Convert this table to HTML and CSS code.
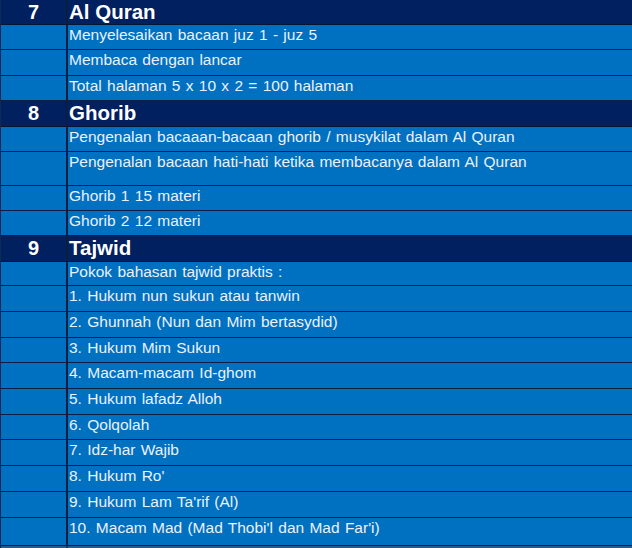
FILE: index.html
```html
<!DOCTYPE html>
<html>
<head>
<meta charset="utf-8">
<link rel="stylesheet" href="styles.css">
</head>
<body>
<div class="sheet">
  <div class="row head h25"><div class="num">7</div><div class="txt">Al Quran</div></div>
  <div class="row h25"><div class="num"></div><div class="txt">Menyelesaikan bacaan juz 1 - juz 5</div></div>
  <div class="row h26"><div class="num"></div><div class="txt">Membaca dengan lancar</div></div>
  <div class="row h25"><div class="num"></div><div class="txt">Total halaman 5 x 10 x 2 = 100 halaman</div></div>
  <div class="row head h26"><div class="num">8</div><div class="txt">Ghorib</div></div>
  <div class="row h25"><div class="num"></div><div class="txt">Pengenalan bacaaan-bacaan ghorib / musykilat dalam Al Quran</div></div>
  <div class="row h34"><div class="num"></div><div class="txt">Pengenalan bacaan hati-hati ketika membacanya dalam Al Quran</div></div>
  <div class="row h25"><div class="num"></div><div class="txt">Ghorib 1 15 materi</div></div>
  <div class="row h25"><div class="num"></div><div class="txt">Ghorib 2 12 materi</div></div>
  <div class="row head h26"><div class="num">9</div><div class="txt">Tajwid</div></div>
  <div class="row h24"><div class="num"></div><div class="txt">Pokok bahasan tajwid praktis :</div></div>
  <div class="row h26"><div class="num"></div><div class="txt">1. Hukum nun sukun atau tanwin</div></div>
  <div class="row h26"><div class="num"></div><div class="txt">2. Ghunnah (Nun dan Mim bertasydid)</div></div>
  <div class="row h25"><div class="num"></div><div class="txt">3. Hukum Mim Sukun</div></div>
  <div class="row h26"><div class="num"></div><div class="txt">4. Macam-macam Id-ghom</div></div>
  <div class="row h26"><div class="num"></div><div class="txt">5. Hukum lafadz Alloh</div></div>
  <div class="row h25"><div class="num"></div><div class="txt">6. Qolqolah</div></div>
  <div class="row h26"><div class="num"></div><div class="txt">7. Idz-har Wajib</div></div>
  <div class="row h26"><div class="num"></div><div class="txt">8. Hukum Ro'</div></div>
  <div class="row h26"><div class="num"></div><div class="txt">9. Hukum Lam Ta'rif (Al)</div></div>
  <div class="row h28"><div class="num"></div><div class="txt">10. Macam Mad (Mad Thobi'l dan Mad Far'i)</div></div>
  <div class="row tail"><div class="num"></div><div class="txt"></div></div>
</div>
</body>
</html>
```
FILE: styles.css
```css
html, body {
  margin: 0;
  padding: 0;
  background: #0070c0;
}
.sheet {
  width: 632px;
  height: 548px;
  overflow: hidden;
  font-family: "Liberation Sans", Arial, sans-serif;
  border-left: 1px solid #0d2a52;
  box-sizing: border-box;
}
.row {
  display: grid;
  grid-template-columns: 67px 1fr;
  background: #0070c0;
  color: #eaf2ff;
  border-bottom: 1px solid #0a1e40;
  box-sizing: border-box;
}
.h24 { height: 24px; }
.h25 { height: 25px; }
.h26 { height: 26px; }
.h28 { height: 28px; }
.h34 { height: 34px; }
.num {
  border-right: 2px solid #0a1e40;
}
.txt {
  font-size: 15.5px;
  line-height: 18px;
  padding: 1px 0 0 1px;
  white-space: nowrap;
  word-spacing: 1px;
}
.head {
  background: #002060;
  color: #ffffff;
  border-bottom-color: #061535;
}
.head .num {
  font-size: 20px;
  font-weight: bold;
  text-align: center;
  line-height: 24px;
}
.head .txt {
  font-size: 20.5px;
  font-weight: bold;
  line-height: 24px;
  padding-top: 0;
  word-spacing: 0;
}
.tail {
  height: 10px;
  background: #2a5a8c;
  border-bottom: none;
}
.tail .num { border-right-color: #1a3a66; }
```
